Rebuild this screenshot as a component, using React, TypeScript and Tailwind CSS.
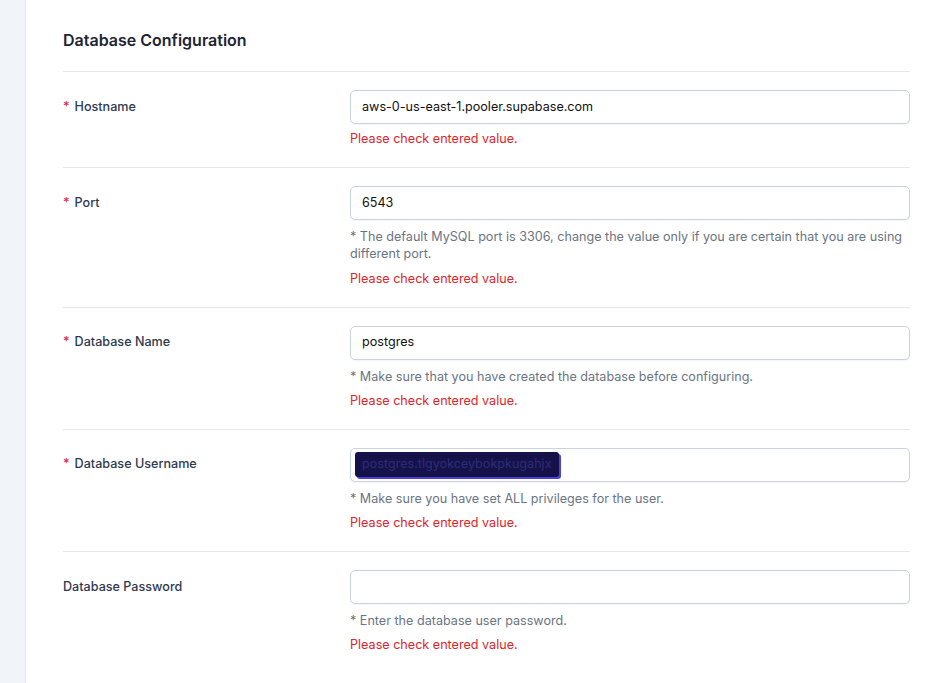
import React from 'react';

type Field = {
  label: string;
  required: boolean;
  value: string;
  help?: string;
  redacted?: boolean;
};

const fields: Field[] = [
  { label: 'Hostname', required: true, value: 'aws-0-us-east-1.pooler.supabase.com' },
  {
    label: 'Port',
    required: true,
    value: '6543',
    help: '* The default MySQL port is 3306, change the value only if you are certain that you are using different port.',
  },
  {
    label: 'Database Name',
    required: true,
    value: 'postgres',
    help: '* Make sure that you have created the database before configuring.',
  },
  {
    label: 'Database Username',
    required: true,
    value: 'postgres.tlgyokceybokpkugahjx',
    help: '* Make sure you have set ALL privileges for the user.',
    redacted: true,
  },
  {
    label: 'Database Password',
    required: false,
    value: '',
    help: '* Enter the database user password.',
  },
];

const App: React.FC = () => {
  return (
    <div className="flex min-h-screen bg-white font-['Inter','Liberation_Sans',sans-serif]">
      {/* side strip */}
      <div className="w-[26px] shrink-0 bg-[#f1f4f9] border-r border-[#e2e7ef]"></div>

      <div className="flex-1 pl-[37px] pr-[34px]">
        <h2 className="pt-[30px] pb-[21px] text-[16px] leading-[20px] font-semibold text-[#1e2433] border-b border-[#e5e7ef]">
          Database Configuration
        </h2>

        {fields.map((f, i) => (
          <div
            key={i}
            className={`grid grid-cols-[287px_1fr] pt-[18px] pb-[19px] ${i < fields.length - 1 ? 'border-b border-[#e5e7ef]' : ''}`}
          >
            <div className="h-[34px] flex items-center text-[12.6px] font-medium text-[#2f3a4f]">
              {f.required && <span className="text-[#e0243a] mr-[5px]">*</span>}
              {f.label}
            </div>

            <div>
              <div className="h-[34px] flex items-center px-[11px] rounded-[5px] border border-[#cbd3e1] bg-white shadow-[0_1px_2px_rgba(15,23,42,0.05)] text-[12.6px] text-[#111]">
                {f.redacted ? (
                  <span className="-ml-[7px] px-[7px] py-[3px] rounded-[3px] bg-[#15124a] text-[#2e2c7a] shadow-[2px_2px_0_#4b43d6]">
                    {f.value}
                  </span>
                ) : (
                  f.value
                )}
              </div>
              {f.help && (
                <p className="mt-[8px] text-[12.6px] leading-[17.25px] text-[#6b7483]">{f.help}</p>
              )}
              <p className={`${f.help ? 'mt-[7px]' : 'mt-[6px]'} text-[12.6px] leading-[18px] text-[#e0242c]`}>
                Please check entered value.
              </p>
            </div>
          </div>
        ))}
      </div>
    </div>
  );
};

export default App;
